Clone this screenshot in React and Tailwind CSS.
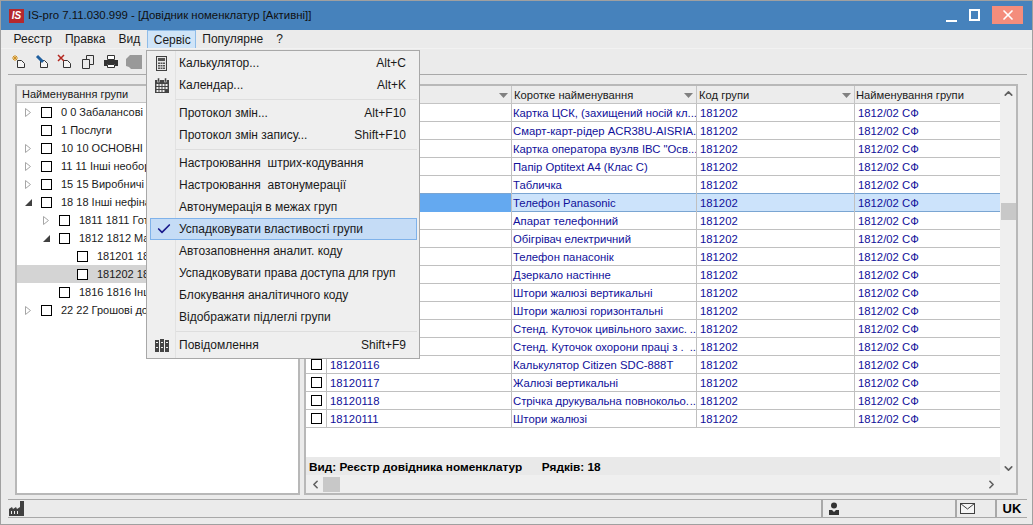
import React from 'react';
import { ChevronUp, ChevronDown, ChevronLeft, ChevronRight, X, Check } from 'lucide-react';

const FONT = "font-['Liberation_Sans',sans-serif]";

const topMenu = ['Реєстр', 'Правка', 'Вид', 'Сервіс', 'Популярне', '?'];

const treeItems = [
  { text: '0 0 Забалансові', level: 0, arrow: 'closed' },
  { text: '1 Послуги', level: 0 },
  { text: '10 10 ОСНОВНІ ЗАСОБИ', level: 0, arrow: 'closed' },
  { text: '11 11 Інші необоротні', level: 0, arrow: 'closed' },
  { text: '15 15 Виробничі запаси', level: 0, arrow: 'closed' },
  { text: '18 18 Інші нефінансові', level: 0, arrow: 'open' },
  { text: '1811 1811 Готова', level: 1, arrow: 'closed' },
  { text: '1812 1812 Малоцінні', level: 1, arrow: 'open' },
  { text: '181201 181201', level: 2 },
  { text: '181202 181202', level: 2, active: true },
  { text: '1816 1816 Інші', level: 1 },
  { text: '22 22 Грошові документи', level: 0, arrow: 'closed' },
];

const rows = [
  ['18120101', 'Картка ЦСК, (захищений носій кл.', true],
  ['18120102', 'Смарт-карт-рідер ACR38U-AISRIA', true],
  ['18120103', 'Картка оператора вузлв ІВС "Осв.', true],
  ['18120104', 'Папір Optitext A4 (Клас C)'],
  ['18120105', 'Табличка'],
  ['18120106', 'Телефон Panasonic'],
  ['18120107', 'Апарат телефонний'],
  ['18120108', 'Обігрівач електричний'],
  ['18120109', 'Телефон панасонік'],
  ['18120110', 'Дзеркало настінне'],
  ['18120112', 'Штори жалюзі вертикальні'],
  ['18120113', 'Штори жалюзі горизонтальні'],
  ['18120114', 'Стенд. Куточок цивільного захис.', true],
  ['18120115', 'Стенд. Куточок охорони праці з .', true],
  ['18120116', 'Калькулятор Citizen SDC-888T'],
  ['18120117', 'Жалюзі вертикальні'],
  ['18120118', 'Стрічка друкувальна повнокольо.', true],
  ['18120111', 'Штори жалюзі'],
];

const Box = () => <span className="block w-[11px] h-[11px] border border-black bg-white shrink-0" />;

const HeadArrow = () => (
  <svg width="9" height="5" viewBox="0 0 9 5" className="shrink-0"><path d="M0 0h9L4.500 5z" fill="#808080" /></svg>
);

const TreeArrow = ({ type }) => {
  if (type === 'closed') return (
    <svg width="6" height="9" viewBox="0 0 6 9"><path d="M.5.500 5.500 4.500.5 8.500z" fill="#fff" stroke="#a6a6a6" /></svg>
  );
  if (type === 'open') return (
    <svg width="7" height="7" viewBox="0 0 7 7"><path d="M7 0v7H0z" fill="#404040" /></svg>
  );
  return null;
};

const CalcIcon = () => (
  <svg width="11" height="15" viewBox="0 0 11 15">
    <rect x=".5" y=".5" width="10" height="14" fill="#e8e8e8" stroke="#404040" />
    <rect x="2" y="2" width="7" height="3" fill="#555" />
    <path d="M2 6.500h2V8H2zM4.500 6.500h2V8h-2zM7 6.500h2V8H7zM2 9h2v1.500H2zM4.500 9h2v1.500h-2zM7 9h2v1.500H7zM2 11.500h2V13H2zM4.500 11.500h2V13h-2zM7 11.500h2V13H7z" fill="#555" />
  </svg>
);

const CalendarIcon = () => (
  <svg width="14" height="15" viewBox="0 0 14 15">
    <rect x="0" y="2" width="14" height="13" fill="#444" />
    <rect x="2.500" y="0" width="2" height="4" fill="#444" stroke="#efefef" strokeWidth=".5" />
    <rect x="9.500" y="0" width="2" height="4" fill="#444" stroke="#efefef" strokeWidth=".5" />
    <path d="M1.500 6h2v2h-2zM4.500 6h2v2h-2zM7.500 6h2v2h-2zM10.500 6h2v2h-2zM1.500 9h2v2h-2zM4.500 9h2v2h-2zM7.500 9h2v2h-2zM10.500 9h2v2h-2zM1.500 12h2v2h-2zM4.500 12h2v2h-2zM7.500 12h2v2h-2z" fill="#eee" />
  </svg>
);

const BooksIcon = () => (
  <svg width="14" height="13" viewBox="0 0 14 13">
    <path d="M0 1h4v12H0zM5 0h4v13H5zM10 1h4v12h-4z" fill="#444" />
    <path d="M1 3h2v1H1zM6 3h2v1H6zM11 3h2v1h-2zM1 8h2v1H1zM6 8h2v1H6zM11 8h2v1h-2z" fill="#eee" />
  </svg>
);

const DocBase = () => <path d="M6.500 6.500h4l3 3v4h-7z" fill="#f5f5f5" stroke="#333" />;

const Toolbar = () => (
  <div className="h-[25px] flex items-center pl-[10px] pt-[1px] gap-[7px]">
    <svg width="16" height="16" viewBox="0 0 16 16"><DocBase /><path d="M4 1v6M1 4h6M2 2l4 4M6 2 2 6" stroke="#d08f1c" strokeWidth="1" /></svg>
    <svg width="16" height="16" viewBox="0 0 16 16"><DocBase /><path d="M3 2l6 6" stroke="#1f5f9e" strokeWidth="3" /></svg>
    <svg width="16" height="16" viewBox="0 0 16 16"><DocBase /><path d="M1 1l6 6M7 1 1 7" stroke="#b3261e" strokeWidth="1.500" /></svg>
    <svg width="16" height="16" viewBox="0 0 16 16"><path d="M6.500 1.500h7v9h-7z" fill="none" stroke="#333" /><path d="M2.500 5.500h7v9h-7z" fill="#ebebeb" stroke="#333" /></svg>
    <svg width="16" height="16" viewBox="0 0 16 16"><path d="M4.500 1.500h7v4h-7z" fill="#fff" stroke="#333" /><path d="M1 6h14v6h-3v-2H4v2H1z" fill="#333" /><path d="M4.500 10.500h7v3h-7z" fill="#fff" stroke="#333" /></svg>
    <svg width="16" height="16" viewBox="0 0 16 16"><path d="M1 4l3-3h12v14H5l-2-2-3-1V5z" fill="#999" /></svg>
  </div>
);

const MenuItem = ({ icon, label, keys, checked }) => (
  <div className={`h-[22px] flex items-center relative ${checked ? 'bg-[#c5dcf6] border border-[#7fb2ea] ml-[3px] mr-[2px]' : ''}`}>
    <span className={`${checked ? 'w-[25px]' : 'w-[29px]'} flex justify-center shrink-0`}>
      {icon}
      {checked && <Check size={16} strokeWidth={2.500} className="text-[#1a1a8c]" />}
    </span>
    <span className="flex-1 pl-[3px] whitespace-pre text-[#1a1a1a]">{label}</span>
    {keys && <span className="pr-[13px] text-[#1a1a1a]">{keys}</span>}
  </div>
);

const MenuSep = () => <div className="h-[6px] flex items-center pl-[29px] pr-[2px]"><div className="h-px w-full bg-[#dedede]" /></div>;

const ServiceMenu = () => (
  <div className="absolute left-[145px] top-[49px] w-[274px] h-[309px] bg-[#efefef] border border-[#a8a8a8] z-10 pt-[1px] text-[12px]">
    <div className="absolute left-[28px] top-0 bottom-0 w-px bg-[#e2e2e2]" />
    <MenuItem icon={<CalcIcon />} label="Калькулятор..." keys="Alt+C" />
    <MenuItem icon={<CalendarIcon />} label="Календар..." keys="Alt+K" />
    <MenuSep />
    <MenuItem label="Протокол змін..." keys="Alt+F10" />
    <MenuItem label="Протокол змін запису..." keys="Shift+F10" />
    <MenuSep />
    <MenuItem label="Настроювання  штрих-кодування" />
    <MenuItem label="Настроювання  автонумерації" />
    <MenuItem label="Автонумерація в межах груп" />
    <MenuItem label="Успадковувати властивості групи" checked />
    <MenuItem label="Автозаповнення аналит. коду" />
    <MenuItem label="Успадковувати права доступа для груп" />
    <MenuItem label="Блокування аналітичного коду" />
    <MenuItem label="Відображати підлеглі групи" />
    <MenuSep />
    <MenuItem icon={<BooksIcon />} label="Повідомлення" keys="Shift+F9" />
  </div>
);

const TreePanel = () => (
  <div className="w-[285px] shrink-0 h-[411px] border-2 border-[#b8b8b8] bg-white overflow-hidden text-[11px]">
    <div className="h-[17px] bg-[#ececec] border-b border-[#c4c4c4] flex items-center pl-[5px] text-[#1a1a1a]">Найменування групи</div>
    {treeItems.map((item) => (
      <div key={item.text} className={`h-[18px] flex items-center ${item.active ? 'bg-[#d4d4d4]' : ''}`}>
        <span className={item.level === 0 ? 'w-[8px]' : item.level === 1 ? 'w-[26px]' : 'w-[44px]'} />
        <span className="w-[16px] flex justify-start">{item.arrow && <TreeArrow type={item.arrow} />}</span>
        <Box />
        <span className="pl-[9px] whitespace-nowrap text-[#1a1a1a]">{item.text}</span>
      </div>
    ))}
  </div>
);

const cols = 'grid grid-cols-[20px_185px_185px_158px_146px]';

const GridPanel = () => (
  <div className="flex-1 h-[411px] border-2 border-[#b8b8b8] bg-white flex flex-col overflow-hidden text-[11.3px]">
    <div className="flex-1 flex min-h-0">
      <div className="flex-1 min-w-0 flex flex-col">
        <div className={`${cols} h-[18px] bg-[#ececec] border-b border-[#c4c4c4] text-[#1a1a1a] text-[11.2px]`}>
          <div />
          {['Код', 'Коротке найменування', 'Код групи', 'Найменування групи'].map((h, i) => (
            <div key={h} className={`flex items-center justify-between pr-[3px] pt-[1px] border-l border-[#c4c4c4] ${i === 3 ? 'pl-[1px]' : 'pl-[2px]'}`}>
              <span>{h}</span>
              {i < 3 && <HeadArrow />}
            </div>
          ))}
        </div>
        {rows.map(([code, name, cut], i) => {
          const selected = i === 5;
          const line = selected || i === 4 ? 'border-[#7aa5d2]' : 'border-[#c0c0c0]';
          return (
            <div key={code} className={`${cols} h-[18px] border-b ${line} text-[#10109a] ${selected ? 'bg-[#cce3fb]' : ''}`}>
              <div className="flex items-center justify-center"><Box /></div>
              <div className={`flex items-center pl-[3px] pt-[1px] border-l border-[#c0c0c0] ${selected ? 'bg-[#64a9f0]' : ''}`}>{code}</div>
              <div className="flex items-center pl-[1px] pt-[1px] border-l border-[#c0c0c0] whitespace-nowrap overflow-hidden">
                <span>{name}</span>
                {cut && <span className="ml-auto">..</span>}
              </div>
              <div className="flex items-center pl-[3px] pt-[1px] border-l border-[#c0c0c0]">181202</div>
              <div className="flex items-center pl-[3px] pt-[1px] border-l border-[#c0c0c0]">1812/02 СФ</div>
            </div>
          );
        })}
        <div className="flex-1" />
        <div className="h-[18px] bg-[#e9e9e9] flex items-center pl-[3px] pt-[3px] font-bold text-black whitespace-pre text-[11.8px]">
          Вид: Реєстр довідника номенклатур      Рядків: 18
        </div>
      </div>
      <div className="w-[16px] shrink-0 bg-[#efefef] flex flex-col items-center justify-between text-[#606060] pt-[1px]">
        <ChevronUp size={13} strokeWidth={3} />
        <div className="flex-1 w-full pt-[103px] pl-[1px]"><div className="h-[17px] w-full bg-[#c8c8c8]" /></div>
        <ChevronDown size={13} strokeWidth={3} />
      </div>
    </div>
    <div className="h-[18px] shrink-0 bg-[#efefef] flex items-center text-[#606060] pr-[18px]">
      <ChevronLeft size={13} strokeWidth={3} className="ml-[3px]" />
      <div className="w-[17px] h-[15px] bg-[#c8c8c8] ml-[1px]" />
      <div className="flex-1" />
      <ChevronRight size={13} strokeWidth={3} />
    </div>
  </div>
);

const StatusBar = () => (
  <div className="ml-[7px] mr-[5px] mt-[4px] h-[19px] border-y border-[#a8a8a8] flex text-black">
    <div className="flex-1 flex items-end pb-[1px]">
      <svg width="16" height="15" viewBox="0 0 16 15" className="ml-[1px]">
        <path d="M0 14V8l3-2 1 2 3-2 1 2 3-2V0h4v15H0z" fill="#404040" />
        <path d="M2 10h1v3H2zM5 10h1v3H5zM8 10h1v3H8z" fill="#eee" />
      </svg>
    </div>
    <div className="w-[134px] border-l-2 border-[#a8a8a8] flex items-center pl-[5px]">
      <svg width="12" height="13" viewBox="0 0 12 13"><circle cx="6" cy="3.500" r="3" fill="#333" /><path d="M1 8h3l2 2 2-2h3v5H1z" fill="#333" /></svg>
    </div>
    <div className="w-[40px] border-l-2 border-[#a8a8a8] flex items-center pl-[3px]">
      <svg width="15" height="11" viewBox="0 0 15 11"><rect x=".5" y=".5" width="14" height="10" fill="#f5f5f5" stroke="#404040" /><path d="M.5.500 7.500 6l7-5.500" fill="none" stroke="#404040" /></svg>
    </div>
    <div className="w-[32px] border-l-2 border-[#a8a8a8] flex items-center justify-center font-bold text-[13px]">UK</div>
  </div>
);

export default function App() {
  return (
    <div className={`${FONT} text-[12px] w-[1033px] h-[525px] bg-[#ebebeb] relative overflow-hidden border border-[#a0a0a0]`}>
      {/* title */}
      <div className="h-[29px] bg-[#4682bc] flex items-center pl-[8px] text-[#101010]">
        <span className="w-[15px] h-[14px] bg-[#b5282d] text-white text-[10px] font-bold italic flex items-center justify-center mr-[4px]">IS</span>
        <span className="text-[11.4px]">IS-pro 7.11.030.999 - [Довідник номенклатур [Активні]]</span>
        <div className="ml-auto flex items-start h-full pt-[5px] pr-[9px]">
          <div className="w-[11px] h-[16px] mr-[12px] flex items-end"><div className="h-[2px] w-[11px] bg-white" /></div>
          <div className="w-[11px] h-[12px] border-2 border-white mr-[12px] mt-[3px]" />
          <div className="w-[31px] h-[18px] bg-[#f48d7c] flex items-center justify-center text-white"><X size={16} strokeWidth={2.500} /></div>
        </div>
      </div>
      {/* menu */}
      <div className="h-[19px] flex items-stretch pl-[6px] text-[12px] text-[#1a1a1a] border-b border-[#f2f2f2]">
        {topMenu.map((m) => (
          <div key={m} className={`flex items-center ${m === 'Сервіс' ? 'bg-[#cfe4f8] border border-[#8fbce8] border-b-0 pl-[6px] pr-[4px]' : 'px-[6.5px]'}`}>{m}</div>
        ))}
      </div>
      <Toolbar />
      <div className="h-px bg-[#a8a8a8] ml-[7px] mr-[5px]" />
      {/* panels */}
      <div className="flex gap-[4px] pl-[14px] pr-[14px] pt-[9px]">
        <TreePanel />
        <GridPanel />
      </div>
      <StatusBar />
      <ServiceMenu />
    </div>
  );
}
